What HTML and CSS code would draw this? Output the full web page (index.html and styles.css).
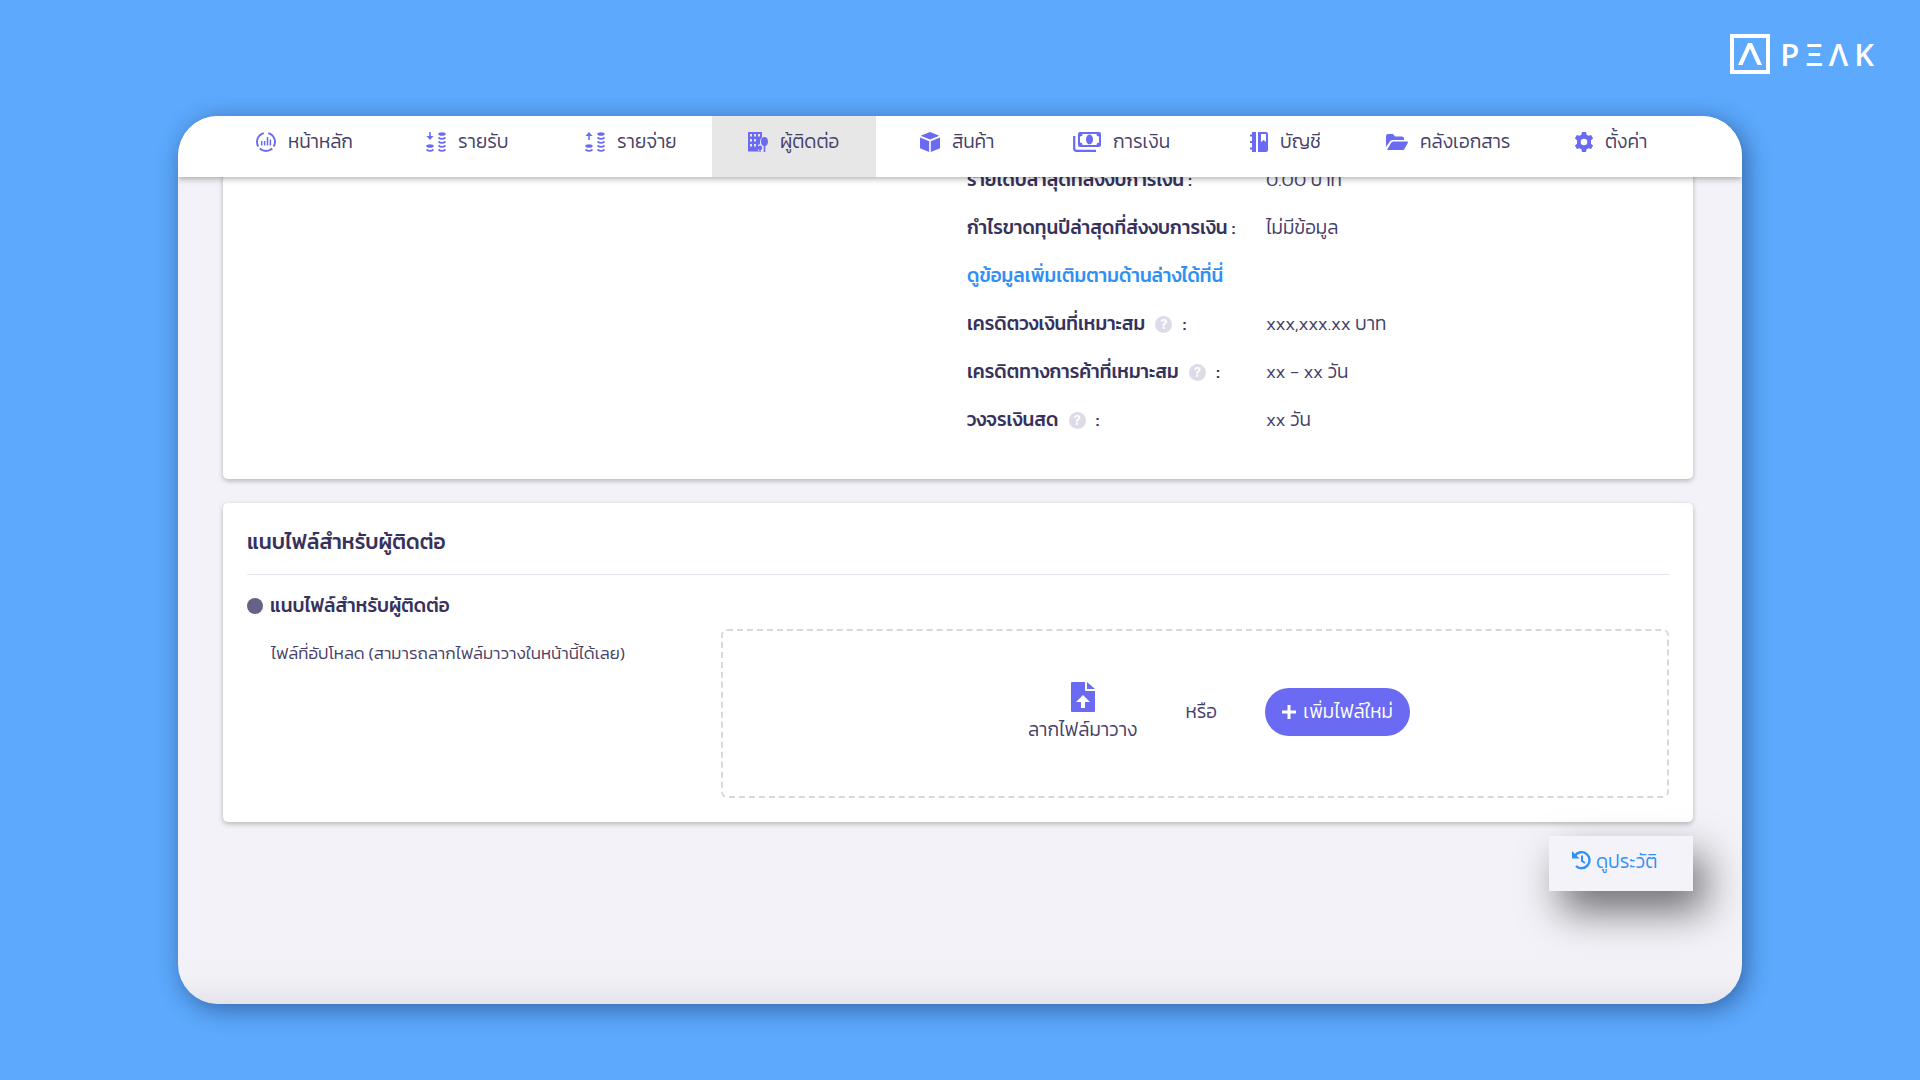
FILE: index.html
```html
<!DOCTYPE html>
<html lang="th">
<head>
<meta charset="utf-8">
<meta name="viewport" content="width=device-width, initial-scale=1">
<title>PEAK - ผู้ติดต่อ</title>
<link rel="stylesheet" href="styles.css">
</head>
<body>
<header class="brand" aria-label="PEAK">
  <svg class="brand-mark" viewBox="0 0 40 40" aria-hidden="true"><rect x="2" y="2" width="36" height="36" fill="none" stroke="#fff" stroke-width="4"/><path d="M8 31 18 9h4l10 22h-4.500L20 14.500 12.500 31z" fill="#fff"/></svg>
  <div class="brand-name"><span>P</span><span>Ξ</span><span>Λ</span><span>K</span></div>
</header>
<div class="window">
  <nav class="tabs">
    <a class="tab" href="#home"><svg class="icon" width="20" height="20" viewBox="0 0 20 20"><g fill="none" stroke="currentColor" stroke-width="1.900"><path d="M7.800 1.200A9 9 0 0 0 2.300 14.500M12.200 1.200a9 9 0 0 1 5.500 13.300M3.800 16.500a9 9 0 0 0 12.400 0"/><path d="M5.700 9v4.500M8.600 9v4.500M11.500 5v8.500M14.400 7.500v6" stroke-width="1.500"/></g></svg>หน้าหลัก</a>
    <a class="tab" href="#income"><svg class="icon" width="20" height="20" viewBox="0 0 20 20"><path d="M3.200 0h1.600v4h2.700L4 8 .5 4h2.700z" fill="currentColor"/><g fill="currentColor"><ellipse cx="4" cy="14" rx="3.700" ry="1.800"/><ellipse cx="16" cy="2" rx="3.700" ry="1.800"/></g><path d="M.5 17.500q3.500 2.800 7 0M12.500 5.500q3.500 2.800 7 0M12.500 9.500q3.500 2.800 7 0M12.500 13.500q3.500 2.800 7 0M12.500 17.500q3.500 2.800 7 0" fill="none" stroke="currentColor" stroke-width="1.700"/></svg>รายรับ</a>
    <a class="tab" href="#expense"><svg class="icon" width="20" height="20" viewBox="0 0 20 20"><path d="M3.200 8h1.600V4h2.700L4 0 .5 4h2.700z" fill="currentColor"/><g fill="currentColor"><ellipse cx="4" cy="14" rx="3.700" ry="1.800"/><ellipse cx="16" cy="2" rx="3.700" ry="1.800"/></g><path d="M.5 17.500q3.500 2.800 7 0M12.500 5.500q3.500 2.800 7 0M12.500 9.500q3.500 2.800 7 0M12.500 13.500q3.500 2.800 7 0M12.500 17.500q3.500 2.800 7 0" fill="none" stroke="currentColor" stroke-width="1.700"/></svg>รายจ่าย</a>
    <a class="tab tab-active" href="#contacts" aria-current="page"><svg class="icon" width="20" height="20" viewBox="0 0 20 20"><path fill="currentColor" fill-rule="evenodd" d="M0 0h14v5.500q-2 1.500-2 4V12l-2 1v5l1 1.500H0zM2 2v2.500h2V2zm4 0v2.500h2V2zm4 0v2.500h2V2zM2 7v2.500h2V7zm4 0v2.500h2V7zM2 12v2.500h2V12zm4 0v2.500h2V12z"/><path fill="currentColor" d="M16.500 5c2.200 0 3.500 2 3.500 4.500s-1 4.200-2.700 4.500v6h-1.600v-6C14 13.700 13 12 13 9.500S14.300 5 16.500 5zM12 13.500c1.400 0 2.200 1 2.200 2.300s-.6 2-1.500 2.200v2h-1.400v-2c-.9-.2-1.500-.9-1.500-2.200s.8-2.300 2.200-2.300z"/></svg>ผู้ติดต่อ</a>
    <a class="tab" href="#products"><svg class="icon" width="20" height="20" viewBox="0 0 20 20"><path fill="currentColor" d="M10 0l9.300 3.700L10 7.600.7 3.700zM0 5.400l9.200 3.900V20L0 16.200zM20 5.400v10.800L10.800 20V9.300z"/></svg>สินค้า</a>
    <a class="tab" href="#finance"><svg class="icon" width="28" height="20" viewBox="0 0 28 20"><path fill="currentColor" fill-rule="evenodd" d="M7 0h19q2 0 2 2v11q0 2-2 2H7q-2 0-2-2V2q0-2 2-2zm2.500 2Q9.500 4.500 7 4.500v6q2.500 0 2.500 2.500h14q0-2.500 2.500-2.500v-6q-2.500 0-2.500-2.500z"/><ellipse cx="16.500" cy="7.500" rx="3.500" ry="5" fill="currentColor"/><path d="M1.200 4v12.500q0 2.300 2.300 2.300H23" fill="none" stroke="currentColor" stroke-width="2.200"/></svg>การเงิน</a>
    <a class="tab" href="#accounting"><svg class="icon" width="18" height="20" viewBox="0 0 18 20"><path fill="currentColor" fill-rule="evenodd" d="M2 0h4v20H2v-2.500H0v-2h2v-4.500H0V9h2V4.500H0v-2h2zM8 0h8q2 0 2 2v16q0 2-2 2H8zm3 2v8l2.500-2L16 10V2z"/></svg>บัญชี</a>
    <a class="tab" href="#documents"><svg class="icon" width="22" height="16" viewBox="0 0 22 16"><path fill="currentColor" d="M0 13V2q0-2 2-2h5l2 2.500h7q2 0 2 2V6H6.500Q4.500 6 3.500 8z"/><path fill="currentColor" d="M1 16l4-7q.7-1.500 2.500-1.500H21q1.500 0 .7 1.500l-3 5.500Q18 16 16.500 16z"/></svg>คลังเอกสาร</a>
    <a class="tab" href="#settings"><svg class="icon" width="18" height="20" viewBox="0 0 18 20"><path fill="currentColor" fill-rule="evenodd" d="M7 0h4l.6 2.700 1.900 1.100 2.600-.9 2 3.500-2.100 1.900v3.400l2.100 1.900-2 3.500-2.600-.9-1.900 1.100L11 20H7l-.6-2.700-1.900-1.100-2.600.9-2-3.500L2 11.700V8.300L-.1 6.400l2-3.500 2.600.9 1.900-1.100zM9 6.700a3.300 3.300 0 1 0 0 6.600 3.300 3.300 0 0 0 0-6.600z"/></svg>ตั้งค่า</a>
  </nav>
  <main class="content">
    <section class="card finance">
      <dl class="facts">
        <dt>รายได้ปีล่าสุดที่ส่งงบการเงิน :</dt><dd>0.00 บาท</dd>
        <dt>กำไรขาดทุนปีล่าสุดที่ส่งงบการเงิน :</dt><dd>ไม่มีข้อมูล</dd>
        <dt class="wide"><a class="link" href="#more">ดูข้อมูลเพิ่มเติมตามด้านล่างได้ที่นี่</a></dt>
        <dt>เครดิตวงเงินที่เหมาะสม <span class="help">?</span> :</dt><dd>xxx,xxx.xx บาท</dd>
        <dt>เครดิตทางการค้าที่เหมาะสม <span class="help">?</span> :</dt><dd>xx - xx วัน</dd>
        <dt>วงจรเงินสด <span class="help">?</span> :</dt><dd>xx วัน</dd>
      </dl>
    </section>
    <section class="card files">
      <h2 class="card-title">แนบไฟล์สำหรับผู้ติดต่อ</h2>
      <h3 class="section-title"><span class="bullet"></span>แนบไฟล์สำหรับผู้ติดต่อ</h3>
      <div class="upload">
        <p class="upload-label">ไฟล์ที่อัปโหลด (สามารถลากไฟล์มาวางในหน้านี้ได้เลย)</p>
        <div class="dropzone">
          <div class="drag"><svg width="24" height="30" viewBox="0 0 24 30"><path fill="currentColor" fill-rule="evenodd" d="M1 0h13v8q0 1 1 1h9v20q0 1-1 1H1q-1 0-1-1V1q0-1 1-1zM12 13l-7 7h5v6h4v-6h5z"/><path fill="currentColor" d="M16 0l8 7H16z"/></svg><span>ลากไฟล์มาวาง</span></div>
          <span>หรือ</span>
          <button class="add" type="button"><svg width="14" height="14" viewBox="0 0 14 14"><path d="M7 0v14M0 7h14" stroke="currentColor" stroke-width="3"/></svg>เพิ่มไฟล์ใหม่</button>
        </div>
      </div>
    </section>
    <a class="history" href="#history"><svg width="19" height="20" viewBox="0 0 19 20"><path d="M3 5.500A8 8 0 1 1 4 16" fill="none" stroke="currentColor" stroke-width="2.400"/><path d="M0 1v7.500h7.500z" fill="currentColor"/><path d="M10 5.500V11l3 2" fill="none" stroke="currentColor" stroke-width="2"/></svg>ดูประวัติ</a>
  </main>
</div>
</body>
</html>
```
FILE: styles.css
```css
* { box-sizing: border-box; }
body {
  margin: 0;
  min-height: 100vh;
  background: #5ca9fd;
  color: #454068;
  font: 300 19px/24px Kanit, Prompt, "Noto Sans Thai", "Noto Sans", "Open Sans", sans-serif;
}
a { color: inherit; text-decoration: none; }
h2, h3, p, dl, dt, dd { margin: 0; }
svg { flex: none; }

.brand {
  display: flex;
  justify-content: flex-end;
  align-items: center;
  gap: 10px;
  height: 116px;
  padding: 0 46px 8px 0;
  color: #fff;
}
.brand-mark { width: 40px; height: 40px; }
.brand-name { display: flex; gap: 6px; font: 600 31px/40px "Open Sans", sans-serif; }

.window {
  margin: 0 178px 76px;
  border-radius: 40px;
  overflow: hidden;
  background: linear-gradient(to top, #e5e4ea 0, #f0f0f5 24px, #f2f2f8 56px);
  box-shadow: 4px 5px 24px rgba(0, 20, 60, .45);
}
.tabs {
  position: relative;
  display: grid;
  grid-template-columns: 162fr 151fr 155fr 164fr 145fr 169fr 128fr 181fr 144fr;
  column-gap: 8px;
  height: 61px;
  padding: 0 59px 0 42px;
  background: #fff;
  box-shadow: 0 2px 6px rgba(0, 0, 0, .3);
}
.tab {
  display: flex;
  align-items: center;
  gap: 12px;
  padding: 0 0 10px 36px;
  white-space: nowrap;
}
.tab-active { background: #e7e7e7; }
.icon { color: #6b6af2; }

.content { display: flex; flex-direction: column; padding: 0 49px 113px 45px; }
.card { background: #fff; border-radius: 5px; box-shadow: 0 2px 5px rgba(0, 0, 0, .25); }
.finance { margin-top: -21px; padding: 0 24px 35px; }
.facts {
  display: grid;
  grid-template-columns: 299px 1fr;
  grid-auto-rows: 48px;
  align-items: center;
  margin-left: 720px;
}
.facts dt, .card-title, .section-title { color: #37325c; font-weight: 500; }
.facts dt { white-space: nowrap; }
.wide { grid-column: 1 / -1; }
.facts .link { color: #3190f5; }
.help {
  display: inline-block;
  width: 17px;
  height: 17px;
  margin: 0 6px;
  border-radius: 50%;
  background: #dddbe8;
  color: #fff;
  font: 700 13px/17px Inter, sans-serif;
  text-align: center;
  vertical-align: 1px;
}

.files { margin-top: 24px; padding: 23px 24px 24px; }
.card-title {
  padding-bottom: 16px;
  border-bottom: 1px solid #e6e5f0;
  font-size: 21px;
  line-height: 32px;
}
.section-title {
  display: flex;
  align-items: center;
  gap: 7px;
  height: 54px;
  padding-top: 8px;
  font-size: 19px;
}
.bullet { width: 16px; height: 16px; border-radius: 50%; background: #666287; }
.upload { display: grid; grid-template-columns: 1fr 2fr; }
.upload-label { padding: 12px 0 0 24px; font-size: 17px; white-space: nowrap; }
.dropzone {
  display: flex;
  justify-content: center;
  align-items: center;
  gap: 48px;
  height: 169px;
  padding: 0 0 3px 48px;
  border: 2px dashed #d8d7df;
  border-radius: 6px;
}
.drag { display: flex; flex-direction: column; align-items: center; gap: 6px; }
.drag svg { color: #6b6af2; }
.add {
  display: flex;
  align-items: center;
  justify-content: center;
  gap: 7px;
  width: 145px;
  height: 48px;
  border: 0;
  border-radius: 24px;
  background: #6b6af2;
  color: #fff;
  font: inherit;
  white-space: nowrap;
}
.history {
  display: flex;
  align-self: flex-end;
  gap: 5px;
  width: 144px;
  height: 55px;
  margin-top: 14px;
  padding: 14px 0 0 23px;
  background: #f3f3f9;
  color: #3190f5;
  white-space: nowrap;
  box-shadow: 12px 20px 40px rgba(0, 0, 0, .55);
}
```
